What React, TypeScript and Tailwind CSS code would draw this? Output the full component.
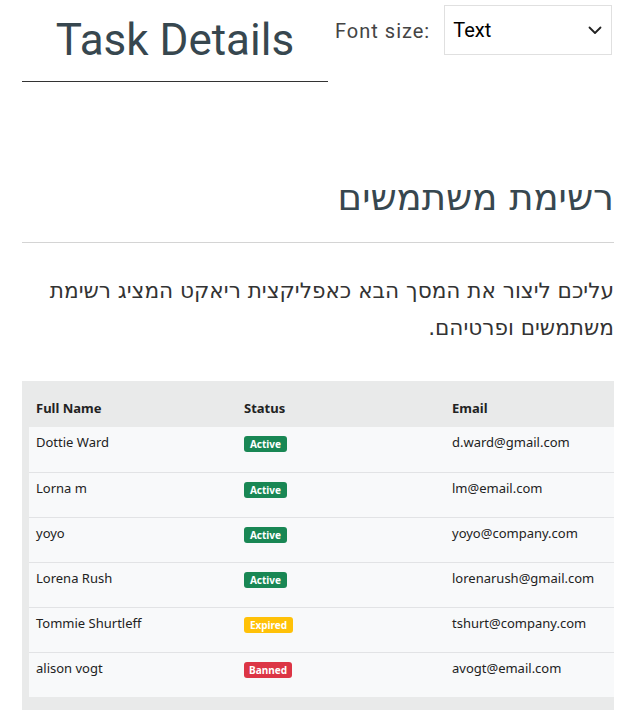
import React from "react";

type User = { name: string; status: "Active" | "Expired" | "Banned"; email: string };

const users: User[] = [
  { name: "Dottie Ward", status: "Active", email: "d.ward@gmail.com" },
  { name: "Lorna m", status: "Active", email: "lm@email.com" },
  { name: "yoyo", status: "Active", email: "yoyo@company.com" },
  { name: "Lorena Rush", status: "Active", email: "lorenarush@gmail.com" },
  { name: "Tommie Shurtleff", status: "Expired", email: "tshurt@company.com" },
  { name: "alison vogt", status: "Banned", email: "avogt@email.com" },
];

function Badge({ status }: { status: User["status"] }) {
  const cls =
    status === "Active"
      ? "bg-[#198754] w-[43px]"
      : status === "Expired"
      ? "bg-[#ffc107] w-[49px]"
      : "bg-[#dc3545] w-[48px]";
  return (
    <span
      className={`${cls} inline-flex h-[16px] items-center justify-center rounded-[3px] text-[10px] font-bold leading-none text-white`}
    >
      {status}
    </span>
  );
}

export default function App() {
  return (
    <div className="min-h-[715px] bg-white" style={{ fontFamily: "Roboto, 'Liberation Sans', sans-serif" }}>
      <div className="flex items-start pl-[22px] pt-[5px]">
        <div className="w-[306px] border-b border-[#333] pb-[11px] text-center">
          <h1 className="mt-[6px] text-[44px] font-normal leading-[59px] text-[#37474f]" style={{ fontFamily: "Roboto, sans-serif" }}>
            Task Details
          </h1>
        </div>
        <label className="ml-[7px] mt-[14px] text-[20px] leading-[24px] tracking-[1px] text-[#444]">Font size:</label>
        <div className="ml-[14px] flex h-[50px] w-[168px] items-center justify-between border border-[#e0e0e0] pl-[8px] pr-[8px]">
          <span className="text-[20px] leading-none text-black">Text</span>
          <svg width="16" height="16" viewBox="0 0 16 16" fill="none" stroke="#222" strokeWidth="1.8" strokeLinecap="round" strokeLinejoin="round">
            <path d="M2.5 5.5 8 11 13.5 5.5" />
          </svg>
        </div>
      </div>

      <div dir="rtl" className="mx-[13px] ml-[22px] mt-[91px]" style={{ fontFamily: "'DejaVu Sans', sans-serif" }}>
        <h2 className="text-[37px] font-normal leading-[49px] text-[#37474f]">רשימת משתמשים</h2>
        <hr className="mt-[20px] border-t border-[#d4d4d4]" />
        <p className="mt-[29px] text-[21.6px] leading-[37px] text-[#333]">
          עליכם ליצור את המסך הבא כאפליקצית ריאקט המציג רשימת משתמשים ופרטיהם.
        </p>
      </div>

      <div
        className="mx-[13px] ml-[22px] mt-[35px] bg-[#e9eaea] pb-[13px] pl-[7px]"
        style={{ fontFamily: "'Noto Sans', 'Open Sans', sans-serif" }}
      >
        <div className="overflow-hidden">
          <div className="flex h-[46px] w-[624px] items-end pb-[9px] text-[13px] font-bold text-[#222]">
            <div className="w-[208px] pl-[7px]">Full Name</div>
            <div className="w-[208px] pl-[7px]">Status</div>
            <div className="w-[208px] pl-[7px]">Email</div>
          </div>
          {users.map((u, i) => (
            <div
              key={u.name}
              className={`flex h-[45px] w-[624px] items-start bg-[#f8f9fa] pt-[6px] text-[13px] text-[#222] ${
                i > 0 ? "border-t border-[#e2e3e5]" : ""
              }`}
            >
              <div className="w-[208px] pl-[7px] leading-[18px]">{u.name}</div>
              <div className="w-[208px] pl-[7px] pt-[1px]">
                <Badge status={u.status} />
              </div>
              <div className="w-[208px] pl-[7px] leading-[18px]">{u.email}</div>
            </div>
          ))}
        </div>
      </div>
    </div>
  );
}
